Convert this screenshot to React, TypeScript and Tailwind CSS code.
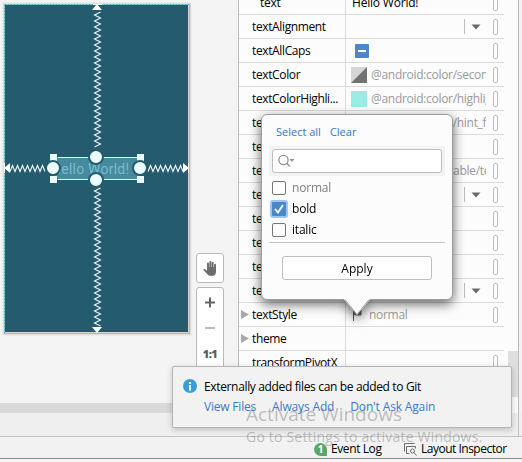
import React from 'react';

type Row = {
  name: string;
  value?: string;
  kind?: 'plain' | 'dropdown' | 'check' | 'split' | 'swatch' | 'ref' | 'flag';
  expandable?: boolean;
  indent?: boolean;
  noPill?: boolean;
};

const rows: Row[] = [
  { name: 'text', value: 'Hello World!', kind: 'plain', indent: true },
  { name: 'textAlignment', kind: 'dropdown' },
  { name: 'textAllCaps', kind: 'check' },
  { name: 'textColor', value: '@android:color/secondary_text', kind: 'split' },
  { name: 'textColorHighli...', value: '@android:color/highlighted_text', kind: 'swatch' },
  { name: 'textColorHint', value: '@android:color/hint_foreground', kind: 'ref' },
  { name: 'textColorLink' },
  { name: 'textCursorDraw...', value: '@android:drawable/text_cursor', kind: 'ref' },
  { name: 'textDirection', kind: 'dropdown' },
  { name: 'textEditNoPaste' },
  { name: 'textIsSelectable' },
  { name: 'textScaleX' },
  { name: 'textSize', kind: 'dropdown' },
  { name: 'textStyle', value: 'normal', kind: 'flag', expandable: true },
  { name: 'theme', expandable: true, noPill: true },
  { name: 'transformPivotX' },
];

function Value({ row }: { row: Row }) {
  switch (row.kind) {
    case 'plain':
      return <span className="pl-[6px] tracking-[-0.2px] text-black">{row.value}</span>;
    case 'dropdown':
      return (
        <div className="ml-auto flex h-[15px] w-[22px] items-center border-l border-[#bdbdbd] pl-[6px]">
          <svg width="10" height="6" viewBox="0 0 10 6"><path d="M0.5 .5h9L5 5.5z" fill="#6a6a6a" /></svg>
        </div>
      );
    case 'check':
      return (
        <div className="ml-[9px] flex h-[14px] w-[14px] items-center justify-center rounded-[1px] bg-[#4b87ca]">
          <div className="h-[2px] w-[8px] bg-white" />
        </div>
      );
    case 'split':
      return (
        <>
          <svg className="ml-[5px] shrink-0" width="16" height="16"><path d="M0 0h16v16H0z" fill="#d6d6d6" /><path d="M16 0v16H0z" fill="#737373" /></svg>
          <span className="ml-[4px] mt-px">{row.value}</span>
        </>
      );
    case 'swatch':
      return (
        <>
          <div className="ml-[5px] h-[16px] w-[16px] shrink-0 bg-[#99ede5]" />
          <span className="ml-[4px] mt-px">{row.value}</span>
        </>
      );
    case 'ref':
      return <span className="ml-[25px] mt-px">{row.value}</span>;
    case 'flag':
      return (
        <>
          <svg className="ml-[7px] shrink-0" width="9" height="12" viewBox="0 0 9 12"><path d="M.5 12V.5M.5 1h7.5v5H4L.5 5.5z" fill="#5e5e5e" stroke="#5e5e5e" /></svg>
          <span className="ml-[7px] mt-px">{row.value}</span>
        </>
      );
    default:
      return null;
  }
}

function PropertyRow({ row }: { row: Row }) {
  return (
    <div className="flex h-[24px] shrink-0 border-b border-[#dcdcdc] text-[12px] tracking-[-0.3px]">
      <div className="flex w-[107px] shrink-0 items-center border-r border-[#dcdcdc]">
        <div className="w-[13px] shrink-0 pl-[2px]">
          {row.expandable && (
            <svg width="8" height="9" viewBox="0 0 8 9"><path d="M0 0l8 4.5L0 9z" fill="#a8a8a8" /></svg>
          )}
        </div>
        <span className={row.indent ? 'ml-[8px]' : 'tracking-[-0.37px]'}>{row.name}</span>
      </div>
      <div className="flex w-[140px] shrink-0 items-center overflow-hidden whitespace-nowrap text-[#999]">
        <Value row={row} />
      </div>
      <div className="flex flex-1 items-center pl-[7px]">
        {!row.noPill && <div className="h-[16px] w-[5px] rounded-[2px] border border-[#bebebe]" />}
      </div>
    </div>
  );
}

function zig(vertical: boolean, fixed: number, from: number, to: number) {
  const pts: string[] = [];
  let side = 1;
  for (let p = from; p <= to; p += vertical ? 3 : 2.5) {
    const q = fixed + side * 3;
    pts.push(vertical ? `${q},${p}` : `${p},${q}`);
    side = -side;
  }
  return pts.join(' ');
}

function Blueprint() {
  const knobs = [[96, 157], [96, 180], [53, 168], [140, 168]];
  const corners = [[50, 154], [137, 154], [50, 176], [137, 176]];
  return (
    <svg width="196" height="340" viewBox="0 0 196 340" className="shrink-0">
      <rect x="2" y="2" width="190" height="334" rx="2" fill="#ebebeb" />
      <rect x="3" y="3" width="188" height="332" rx="1" fill="#dedede" />
      <rect x="4.5" y="4.5" width="185" height="329" fill="#d3d3d3" stroke="#80cbdc" />
      <rect x="5" y="5" width="183" height="327" fill="#245b6e" />
      <path d="M4.5 5V333M5 4.5H189" stroke="#5ba4b8" strokeDasharray="1 2" />
      <g fill="none" stroke="#eff8fa" strokeWidth="1.1">
        <polyline points={zig(true, 97.5, 12, 149)} />
        <polyline points={zig(true, 97.5, 188, 326)} />
        <polyline points={zig(false, 168.5, 10, 46)} />
        <polyline points={zig(false, 168.5, 148, 184)} />
      </g>
      <g fill="#fff">
        <path d="M93 4h9v1h-9zM97 4l5 6H92z" />
        <path d="M92 327h10l-5 6zM4 163h1v10H4zM4 168l6-5v10zM189 168l-6-5v10zM188 163h1v10h-1z" />
      </g>
      <rect x="54" y="157" width="85" height="23" fill="#47899d" />
      <path d="M58 157.5h79M58 179.5h79" stroke="#dff5fb" />
      <text x="51" y="174" fontSize="14" fill="#78bdcf" textLength="78" style={{ fontFamily: 'Roboto, sans-serif' }}>Hello World!</text>
      {corners.map(([x, y]) => <rect key={`${x}-${y}`} x={x} y={y} width="7" height="7" fill="#eafaff" />)}
      {knobs.map(([cx, cy]) => <circle key={`${cx}-${cy}`} cx={cx} cy={cy} r="7" fill="#eafaff" stroke="#245b6e" strokeWidth="2" />)}
    </svg>
  );
}

function ZoomControls() {
  return (
    <div className="mt-[253px] flex w-[28px] flex-col gap-[4px]">
      <div className="flex h-[30px] items-center justify-center rounded-[3px] border border-[#bababa] bg-white">
        <svg width="14" height="15" viewBox="0 0 14 15" fill="none" stroke="#6c6c6c" strokeLinecap="round">
          <path d="M5 8V2.5M7.3 8V1M9.6 8V1.6M12 9V3.8" strokeWidth="1.9" />
          <path d="M4 6h9v4.5c0 2.6-1 4.2-3.2 4.2H7c-1.2 0-2-.7-2.8-1.8L.4 8.9c-.3-.8.9-1.2 1.6-.7l2 1.5z" fill="#6c6c6c" stroke="none" />
        </svg>
      </div>
      <div className="flex h-[116px] flex-col items-center rounded-[3px] border border-[#bababa] bg-white pt-[9px]">
        <svg width="12" height="32" viewBox="0 0 12 32"><path d="M1 5.5h10M6 .5v10" stroke="#666" strokeWidth="2" /><path d="M1 31h10" stroke="#bcbcbc" strokeWidth="2" /></svg>
        <span className="mt-[17px] h-[16px] font-['Noto_Sans'] text-[11px] font-black leading-[16px] tracking-[-0.6px] text-[#5e5e5e]">1:1</span>
      </div>
    </div>
  );
}

function Option({ label, checked, muted }: { label: string; checked?: boolean; muted?: boolean }) {
  return (
    <div className="flex h-[21px] items-center gap-[6px] pl-[10px] text-[12px] tracking-[-0.2px]">
      {checked ? (
        <div className="flex h-[14px] w-[14px] items-center justify-center rounded-[1px] bg-[#4b87ca] ring-2 ring-[#9dc6f2]">
          <svg width="10" height="10" viewBox="0 0 10 10"><path d="M1 5l3 3.5L9 1" fill="none" stroke="#fff" strokeWidth="1.8" /></svg>
        </div>
      ) : (
        <div className="h-[14px] w-[14px] rounded-[2px] border border-[#777] bg-white" />
      )}
      <span className={muted ? 'text-[#808080]' : 'text-black'}>{label}</span>
    </div>
  );
}

function StylePopup() {
  return (
    <div className="absolute left-[261px] top-[114px] h-[202px] w-[192px] drop-shadow-[0_4px_6px_rgba(0,0,0,0.6)]">
      <div className="flex h-[186px] flex-col rounded-[6px] border border-[#9d9d9d] bg-[#fcfcfc]">
        <div className="flex gap-[9px] pl-[14px] pt-[9px] text-[11px] leading-[16px] text-[#3b73c6]">
          <span>Select all</span><span>Clear</span>
        </div>
        <div className="mx-[7px] mt-[6px] h-[30px] bg-[#f3f3f3] p-[3px]">
          <div className="flex h-[24px] items-center rounded-[3px] border border-[#bdbdbd] bg-white pl-[5px]">
            <svg width="17" height="14" viewBox="0 0 17 14" fill="none" stroke="#8b949b" strokeWidth="1.3"><circle cx="5.5" cy="6" r="4.6" /><path d="M8.6 9l3 3.5" /><path d="M11.5 5h5L14 8z" fill="#8b949b" stroke="none" /></svg>
          </div>
        </div>
        <div className="mt-[1px] flex flex-col">
          <Option label="normal" muted />
          <Option label="bold" checked />
          <Option label="italic" />
        </div>
        <div className="mx-[7px] mt-[2px] h-px bg-[#c5c5c5]" />
        <div className="mx-[20px] mt-[13px] flex h-[24px] items-center justify-center rounded-[3px] border border-[#bdbdbd] bg-white text-[12px]"><span className="mt-px">Apply</span></div>
      </div>
      <svg className="relative -top-px ml-[83px]" width="26" height="17" viewBox="0 0 26 17"><path d="M0 .5L13 16 26 .5V0H0z" fill="#fcfcfc" /><path d="M1 .5L13 15.5 25 .5" fill="none" stroke="#9d9d9d" /></svg>
    </div>
  );
}

function Notification() {
  return (
    <div className="absolute left-[172px] top-[366px] flex h-[62px] w-[340px] gap-[7px] rounded-[2px] border border-[#b4b4b4] bg-[#f2f2f2] pl-[10px] pt-[12px] shadow-[0_2px_6px_rgba(0,0,0,0.2)]">
      <svg className="shrink-0" width="14" height="14" viewBox="0 0 14 14"><circle cx="7" cy="7" r="7" fill="#389fd6" /><path d="M6 3h2v2H6zM6 6h2v5.5H6z" fill="#fff" /></svg>
      <div className="whitespace-nowrap text-[12px] leading-[16px]">
        <div className="tracking-[-0.35px]">Externally added files can be added to Git</div>
        <div className="mt-[4px] flex gap-[16px] tracking-[-0.15px] text-[#4078cc]"><span className="tracking-[-0.2px]">View Files</span><span>Always Add</span><span>Don't Ask Again</span></div>
      </div>
    </div>
  );
}

export default function App() {
  return (
    <div className="relative flex h-[462px] w-[522px] flex-col overflow-hidden bg-[#f2f2f2] font-['Open_Sans',sans-serif] text-[12px] text-black">
      <div className="flex h-[413px] shrink-0">
        <div className="flex w-[238px] flex-col bg-[#f4f4f4]">
          <div className="flex h-[403px] overflow-hidden"><Blueprint /><ZoomControls /></div>
          <div className="h-[10px] bg-[#d9d9d9]" />
        </div>
        <div className="flex w-[281px] overflow-hidden border-x border-[#bcbcbc] bg-[#fcfcfc]">
          <div className="-mt-[9px] flex w-[265px] flex-col">{rows.map((r) => <PropertyRow key={r.name} row={r} />)}</div>
          <div className="ml-[4px] mt-[351px] h-[46px] w-[10px] bg-[#dfdfdf]" />
        </div>
      </div>
      <div className="flex h-[24px] shrink-0 border-b border-[#c4c4c4] bg-[#efefef]"><div className="w-[519px] border-r border-[#c4c4c4]" /></div>
      <div className="flex h-[22px] shrink-0 items-center whitespace-nowrap border-b border-[#8d8d8d] pl-[314px] pt-[3px]">
        <div className="mr-[4px] flex h-[13px] w-[13px] shrink-0 items-center justify-center rounded-full rounded-br-none bg-[#59a869] text-[10px] font-bold leading-none text-white">1</div>
        <span className="w-[73px] tracking-[-0.4px]">Event Log</span>
        <svg className="mr-[4px] shrink-0" width="13" height="13" viewBox="0 0 13 13" fill="none" stroke="#6e6e6e"><path d="M.5 8.5V.5h10M2.5 10.5v-7h9v2M2.5 10.5h3" /><circle cx="8.5" cy="8" r="2" /><path d="M10 9.5l2.5 3" /></svg>
        <span className="tracking-[-0.5px]">Layout Inspector</span>
      </div>
      <div className="flex-1 bg-[#f5f5f5]" />
      <StylePopup />
      <Notification />
      <div className="absolute left-[246px] top-[402px] whitespace-nowrap text-[rgba(110,110,110,0.42)]">
        <div className="text-[19px] leading-[24px]">Activate Windows</div>
        <div className="text-[14px] leading-[22px] tracking-[0.2px]">Go to Settings to activate Windows.</div>
      </div>
    </div>
  );
}
